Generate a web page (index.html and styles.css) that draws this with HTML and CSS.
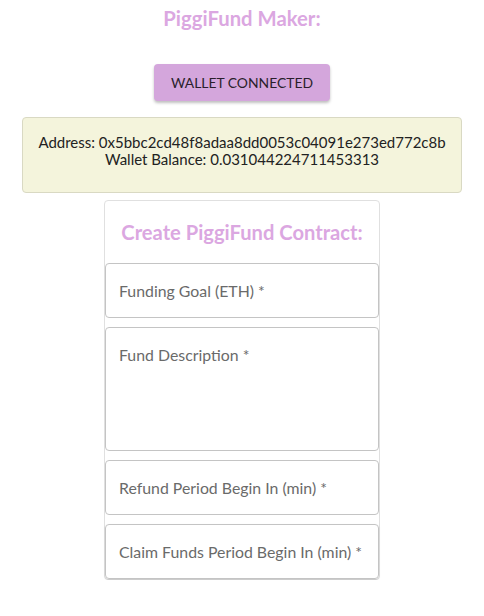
FILE: index.html
```html
<!DOCTYPE html>
<html>
<head>
<meta charset="utf-8">
<link rel="stylesheet" href="styles.css">
</head>
<body>
<div class="page">
  <h1 class="title">PiggiFund Maker:</h1>
  <button class="wallet-btn">WALLET CONNECTED</button>
  <div class="info">
    <div>Address: 0x5bbc2cd48f8adaa8dd0053c04091e273ed772c8b</div>
    <div>Wallet Balance: 0.031044224711453313</div>
  </div>
  <div class="card">
    <h2 class="card-title">Create PiggiFund Contract:</h2>
    <div class="fields">
      <div class="field">Funding Goal (ETH) *</div>
      <div class="field field-tall">Fund Description *</div>
      <div class="field">Refund Period Begin In (min) *</div>
      <div class="field">Claim Funds Period Begin In (min) *</div>
    </div>
  </div>
</div>
</body>
</html>
```
FILE: styles.css
```css
html, body {
  margin: 0;
  padding: 0;
  background: #ffffff;
}
body {
  font-family: Lato, "Open Sans", sans-serif;
  color: #222;
}
.page {
  display: flex;
  flex-direction: column;
  align-items: center;
  padding-top: 6px;
}
.title {
  margin: 0;
  font-size: 20.3px;
  line-height: 24px;
  font-weight: 700;
  color: #dba7e1;
}
.wallet-btn {
  margin-top: 34px;
  width: 176px;
  height: 37px;
  border: none;
  border-radius: 4px;
  background: #d4a6dc;
  color: #2a1f2c;
  font-family: Lato, sans-serif;
  font-size: 13.9px;
  box-shadow: 0 2px 3px rgba(0,0,0,0.25);
  padding: 0;
}
.info {
  margin-top: 16px;
  width: 440px;
  box-sizing: border-box;
  height: 76px;
  padding-top: 16px;
  background: #f4f4dc;
  border: 1px solid #d9d9c3;
  border-radius: 4px;
  text-align: center;
  font-size: 15px;
  line-height: 17px;
  color: #222;
}
.card {
  margin-top: 7px;
  width: 276px;
  box-sizing: border-box;
  border: 1px solid #e0e0e0;
  border-radius: 4px;
  padding-top: 19px;
  display: flex;
  flex-direction: column;
  align-items: center;
}
.card-title {
  margin: 0;
  font-size: 20.15px;
  line-height: 24px;
  font-weight: 700;
  color: #dba7e1;
}
.fields {
  margin-top: 19px;
  width: 100%;
  display: flex;
  flex-direction: column;
  gap: 9px;
}
.field {
  box-sizing: border-box;
  height: 55px;
  border: 1px solid #c4c4c4;
  border-radius: 4px;
  padding: 17px 0 0 13px;
  font-size: 15.85px;
  line-height: 19px;
  color: #6a6a6a;
}
.field-tall {
  height: 124px;
}
.field:last-child {
  box-shadow: 0 1px 2px rgba(0,0,0,0.12);
}
```
